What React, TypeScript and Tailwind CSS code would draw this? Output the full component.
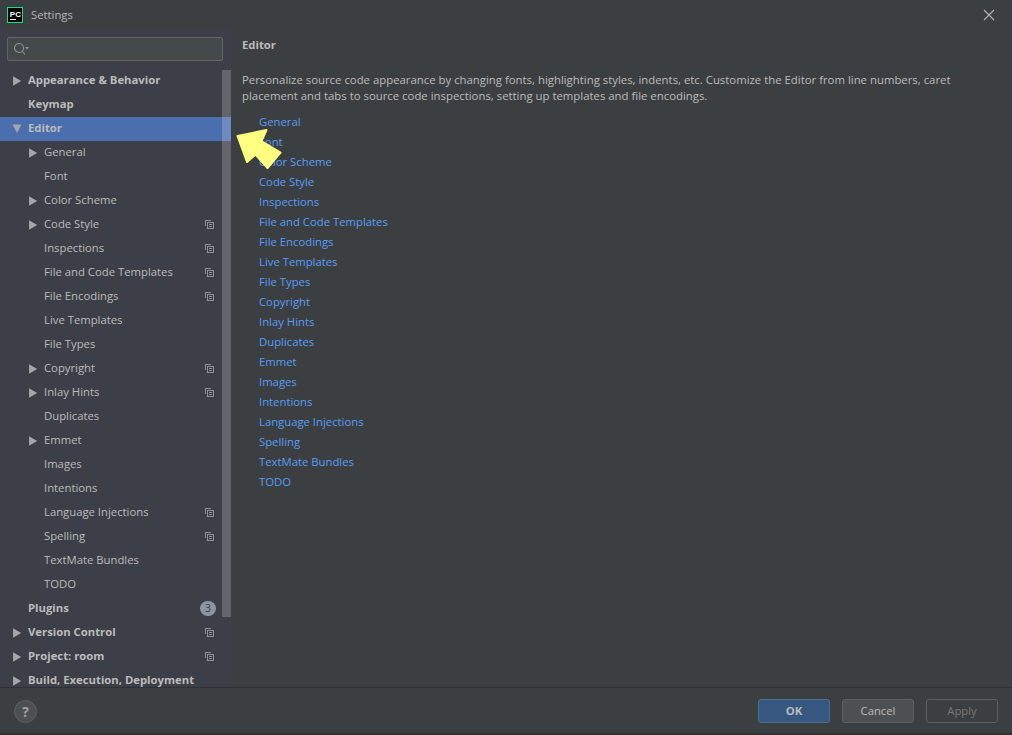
import React from "react";

type Row = { label: string; level: 0 | 1; arrow?: boolean; open?: boolean; bold?: boolean; copy?: boolean; selected?: boolean; badge?: string };

const rows: Row[] = [
  { label: "Appearance & Behavior", level: 0, arrow: true, bold: true },
  { label: "Keymap", level: 0, bold: true },
  { label: "Editor", level: 0, arrow: true, open: true, bold: true, selected: true },
  { label: "General", level: 1, arrow: true },
  { label: "Font", level: 1 },
  { label: "Color Scheme", level: 1, arrow: true },
  { label: "Code Style", level: 1, arrow: true, copy: true },
  { label: "Inspections", level: 1, copy: true },
  { label: "File and Code Templates", level: 1, copy: true },
  { label: "File Encodings", level: 1, copy: true },
  { label: "Live Templates", level: 1 },
  { label: "File Types", level: 1 },
  { label: "Copyright", level: 1, arrow: true, copy: true },
  { label: "Inlay Hints", level: 1, arrow: true, copy: true },
  { label: "Duplicates", level: 1 },
  { label: "Emmet", level: 1, arrow: true },
  { label: "Images", level: 1 },
  { label: "Intentions", level: 1 },
  { label: "Language Injections", level: 1, copy: true },
  { label: "Spelling", level: 1, copy: true },
  { label: "TextMate Bundles", level: 1 },
  { label: "TODO", level: 1 },
  { label: "Plugins", level: 0, bold: true, badge: "3" },
  { label: "Version Control", level: 0, arrow: true, bold: true, copy: true },
  { label: "Project: room", level: 0, arrow: true, bold: true, copy: true },
  { label: "Build, Execution, Deployment", level: 0, arrow: true, bold: true },
];

const links = [
  "General", "Font", "Color Scheme", "Code Style", "Inspections", "File and Code Templates", "File Encodings",
  "Live Templates", "File Types", "Copyright", "Inlay Hints", "Duplicates", "Emmet", "Images", "Intentions",
  "Language Injections", "Spelling", "TextMate Bundles", "TODO",
];

function Triangle({ open }: { open?: boolean }) {
  return (
    <svg width="10" height="10" viewBox="0 0 10 10" className="shrink-0 overflow-visible">
      {open ? <polygon points="0.5,0.5 9.5,0.5 5,9" fill="#a3a6a8" /> : <polygon points="1,0.2 9.2,5 1,9.8" fill="#a3a6a8" />}
    </svg>
  );
}

function CopyIcon() {
  return (
    <svg width="9" height="9" viewBox="0 0 9 9" fill="none" stroke="#8d9196" strokeWidth="1">
      <path d="M0.5 6V0.5H6" />
      <rect x="2.5" y="2.5" width="6" height="6" />
      <path d="M4 4.5H7M4 6.5H7" />
    </svg>
  );
}

function TreeRow({ row }: { row: Row }) {
  return (
    <div className={`relative flex h-6 shrink-0 items-center ${row.selected ? "bg-[#4b6eaf]" : ""} ${row.level === 0 ? "pl-3" : "pl-[28px]"}`}>
      <span className="flex w-4 shrink-0 items-center">{row.arrow && <Triangle open={row.open} />}</span>
      <span className={`pb-[2px] text-[11.3px] whitespace-nowrap text-[#bbbbbb] ${row.bold ? "font-bold" : ""}`}>{row.label}</span>
      {row.copy && (
        <span className="absolute left-[205px] top-[7px] flex">
          <CopyIcon />
        </span>
      )}
      {row.badge && (
        <span className="absolute left-[200px] top-[4px] flex h-[15px] w-4 items-center justify-center rounded-full bg-[#8a97a3] text-[11px] text-[#3c3f4a]">
          {row.badge}
        </span>
      )}
    </div>
  );
}

export default function App() {
  return (
    <div className="relative flex h-[735px] w-[1012px] flex-col overflow-hidden bg-[#3c3f41] font-['Open_Sans',sans-serif] text-[#bbbbbb]">
      <div className="flex h-[29px] shrink-0 items-center pl-[7px] pr-[17px] pt-[1px]">
        <svg width="16" height="16" viewBox="0 0 16 16" className="shrink-0">
          <rect width="16" height="16" fill="#000" />
          <rect x="0.5" y="0.5" width="15" height="15" fill="none" stroke="#21d789" strokeWidth="1.1" />
          <text x="2.8" y="9.5" fill="#fff" fontSize="8" fontWeight="700" fontFamily="'Liberation Sans',sans-serif">PC</text>
          <rect x="3" y="12" width="6" height="1" fill="#fff" />
        </svg>
        <span className="ml-2 text-[11.3px] text-[#b4b6b7]">Settings</span>
        <svg width="12" height="12" viewBox="0 0 12 12" className="ml-auto" stroke="#b4b6b7" strokeWidth="1.1">
          <path d="M1 1L11 11M11 1L1 11" />
        </svg>
      </div>

      <div className="flex min-h-0 flex-1">
        <aside className="relative w-[231px] shrink-0 overflow-hidden bg-[#3c3f48]">
          <div className="ml-[7px] mt-2 flex h-6 w-[216px] items-center rounded-[2px] border border-[#646464] bg-[#45494a] pl-[5px]">
            <svg width="16" height="14" viewBox="0 0 16 14" fill="none" stroke="#8f9294" strokeWidth="1.1">
              <circle cx="6" cy="6" r="4.5" />
              <path d="M9.5 9.5L12 12.5" />
              <polygon points="12,5 16,5 14,7.5" fill="#8f9294" stroke="none" />
            </svg>
          </div>
          <div className="mt-2 flex flex-col">
            {rows.map((r) => (
              <TreeRow key={r.label} row={r} />
            ))}
          </div>
          <div className="absolute left-[222px] top-[41px] h-[547px] w-[9px] bg-[#ffffff]/20" />
        </aside>

        <main className="min-w-0 flex-1 pl-[11px] pt-[8px]">
          <div className="text-[11.3px] font-bold leading-4 text-[#bbbbbb]">Editor</div>
          <p className="mt-[19px] w-[730px] text-[11.36px] leading-4 text-[#bbbbbb]">
            Personalize source code appearance by changing fonts, highlighting styles, indents, etc. Customize the Editor from line numbers, caret placement and tabs to source code inspections, setting up templates and file encodings.
          </p>
          <div className="mt-[8px] flex flex-col pl-[17px]">
            {links.map((l) => (
              <a key={l} className="h-5 text-[11.3px] leading-5 text-[#589df6]">
                {l}
              </a>
            ))}
          </div>
        </main>
      </div>

      <div className="flex h-[48px] shrink-0 items-center border-t border-b-2 border-t-[#2f3132] border-b-[#2f3132] pl-[14px] pr-[14px] pt-[1px]">
        <div className="flex h-[23px] w-[23px] items-center justify-center rounded-full border border-[#5e6060] bg-[#4c5052] text-[14px] font-bold text-[#a0a2a3]">?</div>
        <div className="ml-auto flex gap-3">
          <button className="h-6 w-[72px] rounded-[3px] border border-[#4c708c] bg-[#365880] text-[11.3px] font-bold text-[#bbbbbb]">OK</button>
          <button className="h-6 w-[72px] rounded-[3px] border border-[#5e6060] bg-[#4c5052] text-[11.3px] text-[#bbbbbb]">Cancel</button>
          <button className="h-6 w-[72px] rounded-[3px] border border-[#5e6060] text-[11.3px] text-[#777777]">Apply</button>
        </div>
      </div>

      <svg className="pointer-events-none absolute left-[230px] top-[122px]" width="60" height="54" viewBox="230 122 60 54">
        <polygon
          points="237.5,136 266.5,130 261.5,141 280.5,152.5 267.5,168 255.5,154.5 247,162"
          fill="#ffff80"
          stroke="#ffff80"
          strokeWidth="2"
          strokeLinejoin="round"
        />
      </svg>
    </div>
  );
}
